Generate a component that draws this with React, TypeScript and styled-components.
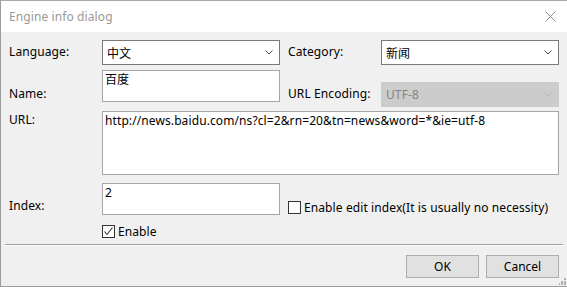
import styled, { createGlobalStyle } from 'styled-components';

const GlobalStyle = createGlobalStyle`
	html, body {
		margin: 0;
		padding: 0;
		background: #ffffff;
	}
	body {
		font-family: 'Noto Sans', 'Noto Sans CJK SC', sans-serif;
		font-size: 12px;
		color: #000000;
	}
`;

const Window = styled.div`
	width: 567px;
	height: 287px;
	box-sizing: border-box;
	border-left: 1px solid #9b9b9b;
	border-top: 1px solid #a8a8a8;
	border-bottom: 1px solid #9b9b9b;
	display: flex;
	flex-direction: column;
	background: #f0f0f0;
	position: relative;
`;

const TitleBar = styled.div`
	height: 31px;
	flex: none;
	background: #ffffff;
	display: flex;
	align-items: center;
	justify-content: space-between;
	padding: 0 11px 0 8px;
`;

const Title = styled.span`
	color: #999999;
	font-size: 12px;
	letter-spacing: 0.1px;
`;

const Body = styled.div`
	flex: 1;
	display: flex;
	flex-direction: column;
	padding: 8px 0 0 8px;
`;

const FormGrid = styled.div`
	display: grid;
	grid-template-columns: 93px 178px 8px 93px 178px;
	grid-template-rows: 30px 41px 72px 42px 19px;
	letter-spacing: 0.1px;
`;

const Label = styled.div<{ $top?: number }>`
	margin-top: ${(p) => p.$top ?? 0}px;
	height: 25px;
	line-height: 24px;
	white-space: nowrap;
`;

const Combo = styled.div<{ $disabled?: boolean; $top?: number }>`
	margin-top: ${(p) => p.$top ?? 0}px;
	box-sizing: border-box;
	height: 25px;
	border: 1px solid ${(p) => (p.$disabled ? '#cccccc' : '#7a7a7a')};
	background: ${(p) => (p.$disabled ? '#cccccc' : '#ffffff')};
	color: ${(p) => (p.$disabled ? '#838383' : '#000000')};
	display: flex;
	align-items: center;
	justify-content: space-between;
	padding: 0 6px 0 4px;
`;

const TextBox = styled.div<{ $h: number; $span?: boolean }>`
	box-sizing: border-box;
	height: ${(p) => p.$h}px;
	grid-column: ${(p) => (p.$span ? '2 / 6' : 'auto')};
	background: #ffffff;
	border: 1px solid #a6a6a6;
	padding: 0 2px;
	line-height: 18px;
	white-space: nowrap;
`;

const Spacer = styled.div``;

const CheckRow = styled.label<{ $top?: number }>`
	margin-top: ${(p) => p.$top ?? 0}px;
	display: flex;
	align-items: center;
	gap: 3px;
	height: 13px;
	white-space: nowrap;
	grid-column: ${(p) => (p.$top ? '4 / 6' : 'auto')};
`;

const Box = styled.span`
	box-sizing: border-box;
	width: 13px;
	height: 13px;
	flex: none;
	border: 1px solid #333333;
	background: #ffffff;
	display: flex;
	align-items: center;
	justify-content: center;
`;

const Footer = styled.div`
	margin: 0 4px 0 -4px;
	border-top: 1px solid #a0a0a0;
	box-shadow: inset 0 1px 0 #ffffff;
	display: flex;
	justify-content: flex-end;
	gap: 7px;
	padding: 10px 4px 0 0;
`;

const Button = styled.button`
	box-sizing: border-box;
	width: 73px;
	height: 23px;
	background: #e1e1e1;
	border: 1px solid #adadad;
	font-family: 'Noto Sans', sans-serif;
	font-size: 12px;
	color: #000000;
	padding: 0;
	margin: 0;
`;

const Grip = styled.svg`
	position: absolute;
	right: 1px;
	bottom: 1px;
`;

const Chevron = ({ color }: { color: string }) => (
	<svg width="8" height="5" viewBox="0 0 8 5">
		<path d="M0.5 0.5 L4 4 L7.5 0.5" fill="none" stroke={color} strokeWidth="1" />
	</svg>
);

const Check = () => (
	<svg width="11" height="11" viewBox="0 0 11 11">
		<path d="M1.5 5.5 L4 8.5 L9.5 1.5" fill="none" stroke="#333333" strokeWidth="1.1" />
	</svg>
);

export default function App() {
	return (
		<>
			<GlobalStyle />
			<Window>
				<TitleBar>
					<Title>Engine info dialog</Title>
					<svg width="11" height="11" viewBox="0 0 11 11">
						<path d="M0.5 0.5 L10.5 10.5 M10.5 0.5 L0.5 10.5" stroke="#8a8a8a" strokeWidth="1" />
					</svg>
				</TitleBar>
				<Body>
					<FormGrid>
						<Label>Language:</Label>
						<Combo>
							<span>中文</span>
							<Chevron color="#444444" />
						</Combo>
						<Spacer />
						<Label>Category:</Label>
						<Combo>
							<span>新闻</span>
							<Chevron color="#444444" />
						</Combo>

						<Label $top={12}>Name:</Label>
						<TextBox $h={32}>百度</TextBox>
						<Spacer />
						<Label $top={12}>URL Encoding:</Label>
						<Combo $disabled $top={12}>
							<span>UTF-8</span>
							<Chevron color="#b5b5b5" />
						</Combo>

						<Label $top={-3}>URL:</Label>
						<TextBox $h={64} $span>
							http://news.baidu.com/ns?cl=2&rn=20&tn=news&word=*&ie=utf-8
						</TextBox>

						<Label $top={11}>Index:</Label>
						<TextBox $h={32}>2</TextBox>
						<Spacer />
						<CheckRow $top={18}>
							<Box />
							Enable edit index(It is usually no necessity)
						</CheckRow>

						<Spacer />
						<CheckRow>
							<Box>
								<Check />
							</Box>
							Enable
						</CheckRow>
					</FormGrid>
					<Footer>
						<Button>OK</Button>
						<Button>Cancel</Button>
					</Footer>
				</Body>
				<Grip width="7" height="7" viewBox="0 0 7 7">
					<g fill="#b0b0b0">
						<rect x="5" y="0" width="2" height="2" />
						<rect x="2" y="3" width="2" height="2" />
						<rect x="5" y="3" width="2" height="2" />
						<rect x="0" y="5" width="1" height="2" />
						<rect x="2" y="5" width="2" height="2" />
						<rect x="5" y="5" width="2" height="2" />
					</g>
				</Grip>
			</Window>
		</>
	);
}
